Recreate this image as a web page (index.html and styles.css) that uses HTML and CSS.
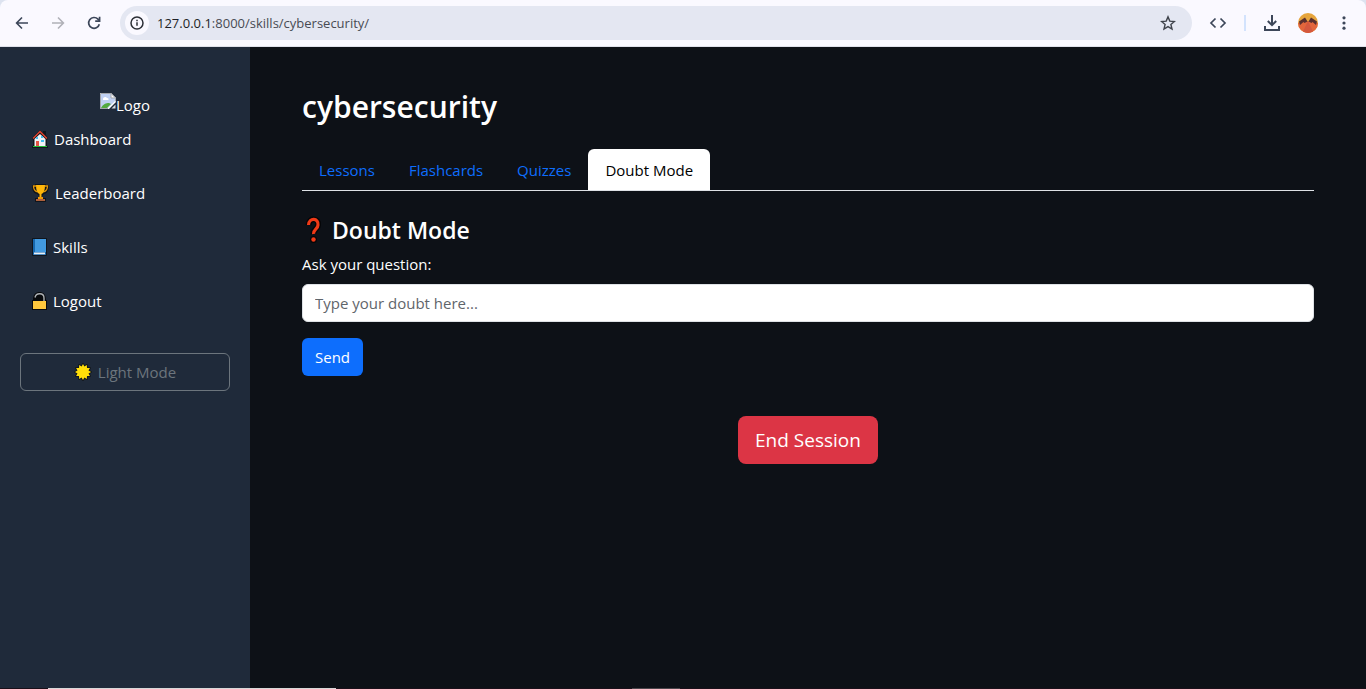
FILE: index.html
```html
<!DOCTYPE html>
<html lang="en">
<head>
<meta charset="utf-8">
<meta name="viewport" content="width=device-width, initial-scale=1">
<title>cybersecurity</title>
<link rel="stylesheet" href="styles.css">
</head>
<body>
<header class="browser">
  <div class="toolbar">
    <div class="nav-buttons">
      <button class="tool" type="button" aria-label="Back"><svg width="16" height="16" viewBox="0 0 16 16" fill="none" stroke="#3c4659" stroke-width="1.6"><path d="M14 8H3M8 2.5 2.6 8 8 13.5"/></svg></button>
      <button class="tool" type="button" aria-label="Forward"><svg width="16" height="16" viewBox="0 0 16 16" fill="none" stroke="#b0b1b8" stroke-width="1.6"><path d="M2 8h11M8 2.5 13.4 8 8 13.5"/></svg></button>
      <button class="tool" type="button" aria-label="Reload"><svg width="16" height="16" viewBox="0 0 16 16" fill="none" stroke="#3c4659" stroke-width="1.7"><path d="M13.3 9.2A5.4 5.4 0 1 1 12 4.2l1.2 1.3"/><path d="M13.6 1.8v4.4H9.2"/></svg></button>
    </div>
    <div class="omnibox">
      <button class="site-info" type="button" aria-label="Site information"><svg width="16" height="16" viewBox="0 0 16 16" fill="none" stroke="#2c2f36" stroke-width="1.5"><circle cx="8" cy="8" r="6"/><path d="M8 7.2v3.6M8 4.8v1.4"/></svg></button>
      <span class="url"><span class="host">127.0.0.1</span>:8000/skills/cybersecurity/</span>
      <button class="tool" type="button" aria-label="Bookmark"><svg width="16" height="16" viewBox="0 0 16 16" fill="none" stroke="#3f434b" stroke-width="1.4"><path d="m8 1.9 1.8 4.2 4.6.4-3.5 3 1.1 4.5-4-2.4L4 14l1.100-4.500-3.500-3 4.600-.4z"/></svg></button>
    </div>
    <div class="actions">
      <button class="tool" type="button" aria-label="Source"><svg width="18" height="16" viewBox="0 0 18 16" fill="none" stroke="#3c4659" stroke-width="1.7"><path d="M6.500 3.500 2 8l4.500 4.500M11.500 3.500 16 8l-4.500 4.500"/></svg></button>
      <span class="divider"></span>
      <button class="tool" type="button" aria-label="Downloads"><svg width="18" height="18" viewBox="0 0 18 18" fill="none" stroke="#3c4659" stroke-width="2"><path d="M9 1v10M4.800 7 9 11.200 13.200 7M2 12v4h14v-4"/></svg></button>
      <button class="tool" type="button" aria-label="Profile"><svg width="20" height="20" viewBox="0 0 20 20"><circle cx="10" cy="10" r="10" fill="#e6a53c"/><path d="M0 10 10 8l10 2a10 10 0 0 1-20 0z" fill="#e2663c"/><path d="m10 8 5 10.500a10 10 0 0 1-10 0z" fill="#d4583e"/><path d="m1 8.500 6-4 2.500 4-3 1.500-1-1-3.500 3zM19 8.500l-6-4-2.500 4 3 1.500 1-1 3.500 3z" fill="#5a2f2e"/></svg></button>
      <button class="tool" type="button" aria-label="Menu"><svg width="16" height="16" viewBox="0 0 16 16" fill="#3c4659"><circle cx="8" cy="2.800" r="1.600"/><circle cx="8" cy="8" r="1.600"/><circle cx="8" cy="13.200" r="1.600"/></svg></button>
    </div>
  </div>
</header>

<div class="app">
  <aside class="sidebar">
    <div class="brand"><svg class="broken" width="16" height="16" viewBox="0 0 16 16"><path d="M0 0h11l5 5v4L9 16H0z" fill="#fff"/><path d="M1 1h10v4h4v3l-7 7H1z" fill="#bfd0f2"/><path d="M3 6c0-2 3-3 4-1 2 0 2 2 1 2H4C3 7 3 7 3 6z" fill="#fff"/><path d="M1 15c2-4 5-5 8-5l2 1-4 4z" fill="#53a93f"/><path d="M.5 16V.5H11L15.500 5v3.500M.5 15.500H8M11 .5V5h4.500" fill="none" stroke="#a3a6ab"/><path d="m15.500 11.500-4 4h4z" fill="#d8dce0"/></svg><span>Logo</span></div>
    <nav class="menu" aria-label="Main">
      <a class="menu-link" href="#"><svg class="emoji" width="16" height="18" viewBox="0 0 16 18"><path d="M8 0 0 8l1 2v6H0v2h16v-2h-1v-6l1-2-2-3V1h-3v2z" fill="#10151c"/><path d="m8 4 5.500 5v7h-11V9z" fill="#f0f2f5"/><path d="m1 8.500 7-7 7 7" fill="none" stroke="#df422f" stroke-width="1.500"/><path d="M4 7h2v2H4zM9 6h2v2H9zM9 10h3v2H9z" fill="#43c1ef"/><path d="M4 11h3v5H4z" fill="#e35444"/><path d="M1 16h14v1H1z" fill="#20bd35"/></svg>Dashboard</a>
      <a class="menu-link" href="#"><svg class="emoji" width="17" height="18" viewBox="0 0 17 18"><path d="M3 0h11v1h3c0 5-1 8-5 9l-2 2v2h4v4H3v-4h4v-2l-2-2C1 9 0 6 0 1h3z" fill="#10151c"/><path d="M4 2H1.500c0 3 1 5 4 6M13 2h2.500c0 3-1 5-4 6" fill="none" stroke="#e19508" stroke-width="1.300"/><path d="M4 1h9c0 5-1 8-3.500 9v4h-2v-4C5 9 4 6 4 1z" fill="#ffb70a"/><path d="M4 15h9v2H4z" fill="#ad603b"/><path d="M6 13h5v2H6z" fill="#f29a08"/></svg>Leaderboard</a>
      <a class="menu-link" href="#"><svg class="emoji" width="15" height="18" viewBox="0 0 15 18"><rect width="15" height="18" rx="1" fill="#10151c"/><path d="M1 1h13v16H1z" fill="#1767ad"/><path d="M3 1h11v13H3z" fill="#429ae0"/><path d="M2 14.500h11v1.800H2z" fill="#e9eff4"/></svg>Skills</a>
      <a class="menu-link" href="#"><svg class="emoji" width="15" height="18" viewBox="0 0 15 18"><path d="M0 8h1C1 2 4 0 7.500 0S14 2 14 8h1v10H0z" fill="#080a0d"/><path d="M3 5.500C4 .5 12 .5 12 6v3" fill="none" stroke="#adb1b5" stroke-width="1.400"/><path d="M1 9h13v8H1z" fill="#ffc83d"/></svg>Logout</a>
    </nav>
    <button class="btn btn-outline" type="button"><svg class="emoji" width="18" height="18" viewBox="0 0 18 18"><g fill="#12171d" stroke="#12171d" stroke-width="2" stroke-linejoin="round"><path id="rays" d="m9 1 1.400 2.500L12.800 2l.2 2.900 2.900.1-1.400 2.500L17 9l-2.500 1.500L15.900 13l-2.900.1-.2 2.900-2.400-1.500L9 17l-1.400-2.500L5.200 16l-.2-2.900L2.100 13l1.400-2.500L1 9l2.500-1.500L2.100 5 5 4.900 5.200 2l2.400 1.500z"/></g><path d="m9 1 1.400 2.500L12.800 2l.2 2.900 2.900.1-1.400 2.500L17 9l-2.500 1.500L15.900 13l-2.900.1-.2 2.900-2.400-1.500L9 17l-1.400-2.500L5.200 16l-.2-2.900L2.100 13l1.400-2.500L1 9l2.500-1.500L2.100 5 5 4.900 5.200 2l2.400 1.500z" fill="#ffde09"/></svg>Light Mode</button>
  </aside>

  <main class="content">
    <h1 class="title">cybersecurity</h1>
    <nav class="tabs" aria-label="Study modes">
      <a class="tab" href="#">Lessons</a>
      <a class="tab" href="#">Flashcards</a>
      <a class="tab" href="#">Quizzes</a>
      <a class="tab active" href="#" aria-current="page">Doubt Mode</a>
    </nav>
    <section class="doubt">
      <h2 class="subtitle"><svg width="24" height="28" viewBox="0 0 24 28" fill="none"><path d="M6.500 9C7 1 17 2 16 9c0 4-5 4.500-4.500 9" stroke="#050608" stroke-width="6"/><circle cx="11.500" cy="23.500" r="3.500" fill="#050608"/><path d="M6.500 9C7 1 17 2 16 9c0 4-5 4.500-4.500 9" stroke="#f03a17" stroke-width="3.200"/><circle cx="11.500" cy="23.500" r="2.200" fill="#f03a17"/></svg>Doubt Mode</h2>
      <form class="form">
        <label class="label" for="question">Ask your question:</label>
        <input class="field" id="question" type="text" placeholder="Type your doubt here...">
        <button class="btn btn-primary" type="button">Send</button>
      </form>
    </section>
    <div class="finish"><button class="btn btn-danger" type="button">End Session</button></div>
  </main>
</div>
<footer class="edge"><span class="edge-search"></span><span class="edge-app"></span></footer>
</body>
</html>
```
FILE: styles.css
```css
* { box-sizing: border-box; }

body {
  margin: 0;
  min-height: 100vh;
  display: flex;
  flex-direction: column;
  background: #0d1117;
  color: #fff;
  font: 15px/24px "Open Sans", "Noto Sans", sans-serif;
}

button, input { font: inherit; }
svg { flex: none; }

.browser { background: #dde3f0; }

.toolbar {
  display: flex;
  align-items: center;
  height: 47px;
  padding: 0 10px;
  background: #faf9ff;
  border-bottom: 1px solid #dfe1ea;
  border-radius: 8px 8px 0 0;
}

.nav-buttons { display: flex; gap: 12px; }

.tool {
  display: flex;
  align-items: center;
  justify-content: center;
  width: 24px;
  height: 24px;
  padding: 0;
  border: 0;
  background: none;
}

.omnibox {
  flex: 1;
  display: flex;
  align-items: center;
  height: 34px;
  margin-left: 14px;
  padding: 0 12px 0 5px;
  border-radius: 17px;
  background: #e4e7f2;
}

.site-info {
  display: flex;
  align-items: center;
  justify-content: center;
  width: 24px;
  height: 24px;
  padding: 0;
  border: 0;
  border-radius: 50%;
  background: #faf9ff;
}

.url {
  flex: 1;
  margin-left: 8px;
  color: #484b53;
  font-size: 13px;
}

.host { color: #1d1f25; }

.actions {
  display: flex;
  align-items: center;
  gap: 12px;
  margin-left: 14px;
}

.divider {
  width: 2px;
  height: 16px;
  margin: 0 2px;
  background: #d3e3fd;
}

.app { flex: 1; display: flex; }

.sidebar {
  flex: none;
  width: 250px;
  padding: 46px 20px 20px;
  background: #1f2a3a;
}

.brand {
  display: flex;
  justify-content: center;
  align-items: flex-start;
  height: 24px;
  margin-bottom: 10px;
}

.menu {
  display: flex;
  flex-direction: column;
  gap: 30px;
  margin-bottom: 40px;
}

.menu-link {
  display: flex;
  align-items: center;
  gap: 6px;
  padding: 0 12px;
  color: #fff;
  text-decoration: none;
}

.btn {
  padding: 6px 12px;
  border: 1px solid transparent;
  border-radius: 6px;
  color: #fff;
}

.btn-outline {
  display: flex;
  align-items: center;
  justify-content: center;
  gap: 6px;
  width: 100%;
  border-color: #6c757d;
  background: none;
  color: #6c757d;
}

.btn-primary { background: #0d6efd; }

.btn-danger {
  padding: 8px 16px;
  border-radius: 8px;
  background: #dc3545;
  font-size: 19px;
  line-height: 30px;
}

.content { flex: 1; padding: 40px 52px; }

.title {
  margin: 0 0 22px;
  font-size: 30px;
  font-weight: 600;
  line-height: 40px;
}

.tabs {
  display: flex;
  margin-bottom: 24px;
  border-bottom: 1px solid #dee2e6;
}

.tab {
  padding: 9px 17px 8px;
  border-radius: 6px 6px 0 0;
  color: #0d6efd;
  text-decoration: none;
}

.active { background: #fff; color: #000; }

.subtitle {
  display: flex;
  align-items: center;
  gap: 6px;
  margin: 0 0 7px;
  font-size: 23px;
  font-weight: 600;
  line-height: 30px;
}

.form {
  display: flex;
  flex-direction: column;
  align-items: flex-start;
}

.label { margin-bottom: 8px; }

.field {
  width: 100%;
  height: 38px;
  margin-bottom: 16px;
  padding: 6px 12px;
  border: 1px solid #dee2e6;
  border-radius: 6px;
  background: #fff;
  color: #212529;
}

.field::placeholder { color: #5f656b; }

.finish { margin-top: 40px; text-align: center; }

.edge { display: flex; height: 1px; background: #190f19; }

.edge-search {
  width: 288px;
  margin-left: 48px;
  background: #d8d8d8;
}

.edge-app {
  width: 48px;
  margin-left: 296px;
  background: #4b454b;
}
```
